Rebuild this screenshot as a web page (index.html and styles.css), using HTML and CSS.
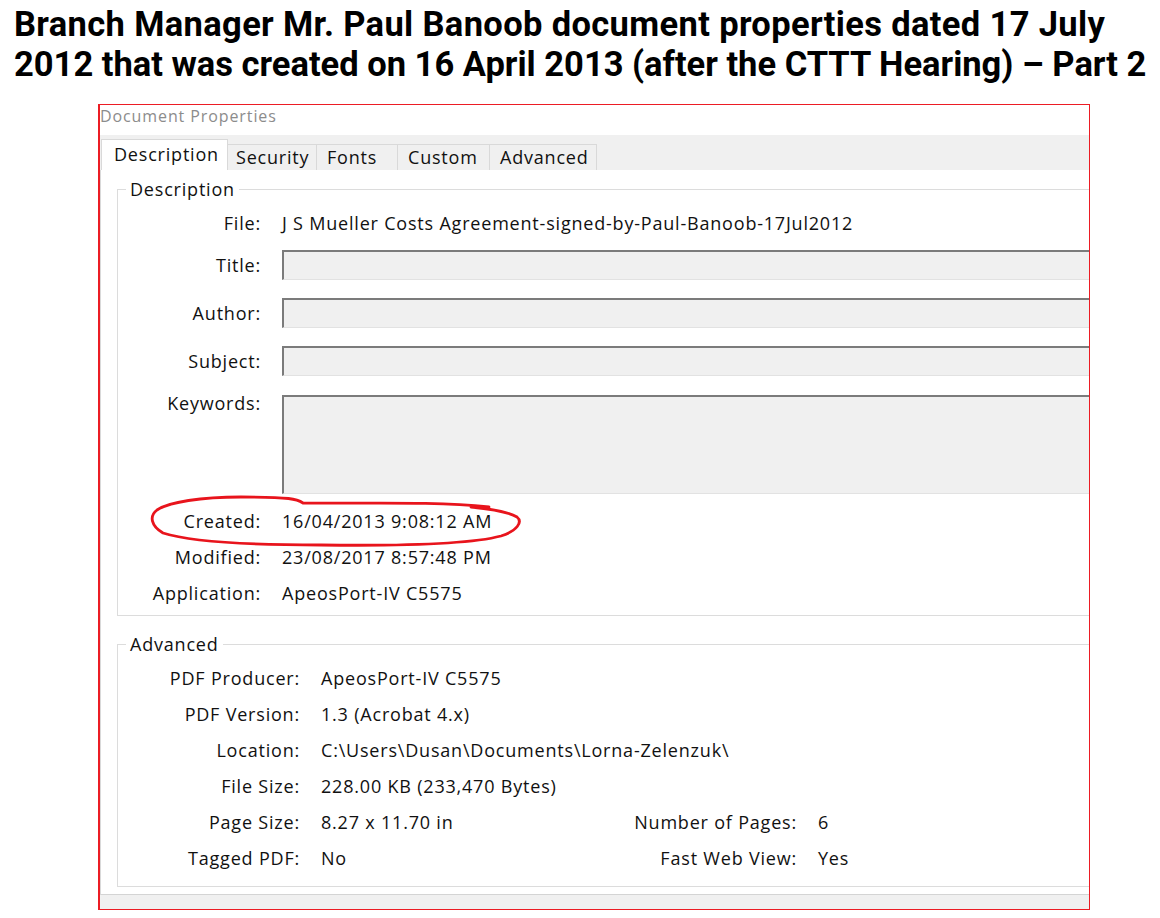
FILE: index.html
```html
<!DOCTYPE html>
<html lang="en">
<head>
    <meta charset="UTF-8">
    <title>Document Properties - Part 2</title>
    <link rel="stylesheet" href="styles.css">
</head>
<body>
    <h1 class="headline">
        <span class="line line-first">Branch Manager Mr. Paul Banoob document properties dated 17 July</span>
        <span class="line">2012 that was created on 16 April 2013 (after the CTTT Hearing) &ndash; Part 2</span>
    </h1>

    <div class="shot">
        <div class="dlg-title">Document Properties</div>

        <div class="tabbar">
            <div class="tab active">Description</div>
            <div class="tab tab-security">Security</div>
            <div class="tab tab-fonts">Fonts</div>
            <div class="tab tab-custom">Custom</div>
            <div class="tab tab-advanced">Advanced</div>
        </div>

        <div class="panel">
            <fieldset class="group group-desc">
                <legend>Description</legend>
                <div class="desc-grid">
                    <div class="lbl">File:</div>
                    <div class="val">J S Mueller Costs Agreement-signed-by-Paul-Banoob-17Jul2012</div>

                    <div class="lbl">Title:</div>
                    <div class="box"></div>

                    <div class="lbl">Author:</div>
                    <div class="box"></div>

                    <div class="lbl">Subject:</div>
                    <div class="box"></div>

                    <div class="lbl lbl-top">Keywords:</div>
                    <div class="box box-tall"></div>

                    <div class="lbl">Created:</div>
                    <div class="val">16/04/2013 9:08:12 AM</div>

                    <div class="lbl">Modified:</div>
                    <div class="val">23/08/2017 8:57:48 PM</div>

                    <div class="lbl">Application:</div>
                    <div class="val">ApeosPort-IV C5575</div>
                </div>
            </fieldset>

            <fieldset class="group group-adv">
                <legend>Advanced</legend>
                <div class="adv-grid">
                    <div class="lbl">PDF Producer:</div>
                    <div class="val span">ApeosPort-IV C5575</div>

                    <div class="lbl">PDF Version:</div>
                    <div class="val span">1.3 (Acrobat 4.x)</div>

                    <div class="lbl">Location:</div>
                    <div class="val span">C:\Users\Dusan\Documents\Lorna-Zelenzuk\</div>

                    <div class="lbl">File Size:</div>
                    <div class="val span">228.00 KB (233,470 Bytes)</div>

                    <div class="lbl">Page Size:</div>
                    <div class="val">8.27 x 11.70 in</div>
                    <div class="lbl">Number of Pages:</div>
                    <div class="val">6</div>

                    <div class="lbl">Tagged PDF:</div>
                    <div class="val">No</div>
                    <div class="lbl">Fast Web View:</div>
                    <div class="val">Yes</div>
                </div>
            </fieldset>
        </div>

        <div class="footer-strip"></div>

        <!-- hand-drawn highlight round the Created row -->
        <svg class="scribble" viewBox="99 105 990 804" width="990" height="804">
            <path d="M488 507 C 430 501, 360 504, 302 503 C 296 499, 290 497, 240 497
                     C 200 497, 168 502, 156 510 C 148 516, 150 526, 162 533
                     C 190 542, 250 545, 320 545 C 400 546, 470 544, 500 536
                     C 516 531, 522 522, 516 517 C 508 512, 490 509, 470 507"
                  fill="none" stroke="#e8141c" stroke-width="2.8" stroke-linecap="round"/>
        </svg>
    </div>
</body>
</html>
```

FILE: styles.css
```css
* {
    box-sizing: border-box;
}

body {
    margin: 0;
    width: 1160px;
    background: #fff;
    color: #000;
}

.headline {
    margin: 0;
    padding: 4px 0 0 14px;
    font-family: Roboto, "Liberation Sans", sans-serif;
    font-weight: bold;
    font-size: 34.5px;
    line-height: 40px;
}

.headline .line {
    display: block;
    white-space: nowrap;
}

.headline .line-first {
    letter-spacing: 0.35px;
}

/* the screenshot, framed in red */
.shot {
    position: relative;
    margin: 20px 0 0 98px;
    width: 992px;
    height: 806px;
    border: 1px solid #ec1c24;
    border-left-width: 2px;
    overflow: hidden;
    font-family: "Open Sans", "Noto Sans", sans-serif;
    font-size: 18px;
    letter-spacing: 0.8px;
    color: #111;
}

.dlg-title {
    height: 30px;
    font-size: 16px;
    letter-spacing: 0.9px;
    line-height: 22px;
    color: #8c8c8c;
}

.tabbar {
    display: flex;
    align-items: flex-end;
    height: 35px;
    padding-left: 1px;
    background: #f0f0f0;
}

.tab {
    height: 26px;
    padding-left: 10px;
    line-height: 24px;
    background: #f0f0f0;
    border: 1px solid #d9d9d9;
    border-bottom: none;
    margin-left: -1px;
    white-space: nowrap;
}

.tab.active {
    position: relative;
    z-index: 1;
    width: 127px;
    height: 31px;
    padding-left: 12px;
    line-height: 28px;
    margin-left: 0;
    background: #fff;
}

.tab-security {
    width: 90px;
    padding-left: 8px;
}

.tab-fonts {
    width: 82px;
}

.tab-custom {
    width: 93px;
}

.tab-advanced {
    width: 108px;
}

.panel {
    width: 1200px;
    height: 725px;
    padding: 8px 0 0 16px;
    background: #fff;
    border-left: 1px solid #d9d9d9;
    border-bottom: 1px solid #d4d4d4;
}

.footer-strip {
    height: 14px;
    background: #f0f0f0;
}

.group {
    width: 1150px;
    margin: 0;
    padding: 5px 0 4px 0;
    border: 1px solid #dcdcdc;
}

.group legend {
    margin-left: 8px;
    padding: 0 4px;
    line-height: 22px;
}

.group-adv {
    margin-top: 17px;
    padding: 5px 0 10px 0;
}

.lbl {
    text-align: right;
    white-space: nowrap;
}

.val {
    white-space: nowrap;
}

.desc-grid {
    display: grid;
    grid-template-columns: 143px 1fr;
    grid-template-rows: 36px 48px 48px 48px 118px 36px 36px 36px;
    column-gap: 21px;
    align-items: center;
}

.lbl-top {
    align-self: start;
    padding-top: 6px;
}

.box {
    height: 30px;
    background: #f0f0f0;
    border-top: 2px solid #7b7b7b;
    border-left: 2px solid #7b7b7b;
    border-bottom: 1px solid #e2e2e2;
}

.box-tall {
    height: 99px;
}

.adv-grid {
    display: grid;
    grid-template-columns: 182px 200px 255px 1fr;
    grid-auto-rows: 36px;
    column-gap: 21px;
    align-items: center;
}

.adv-grid .span {
    grid-column: 2 / -1;
}

.scribble {
    position: absolute;
    left: 0;
    top: 0;
    pointer-events: none;
}
```
